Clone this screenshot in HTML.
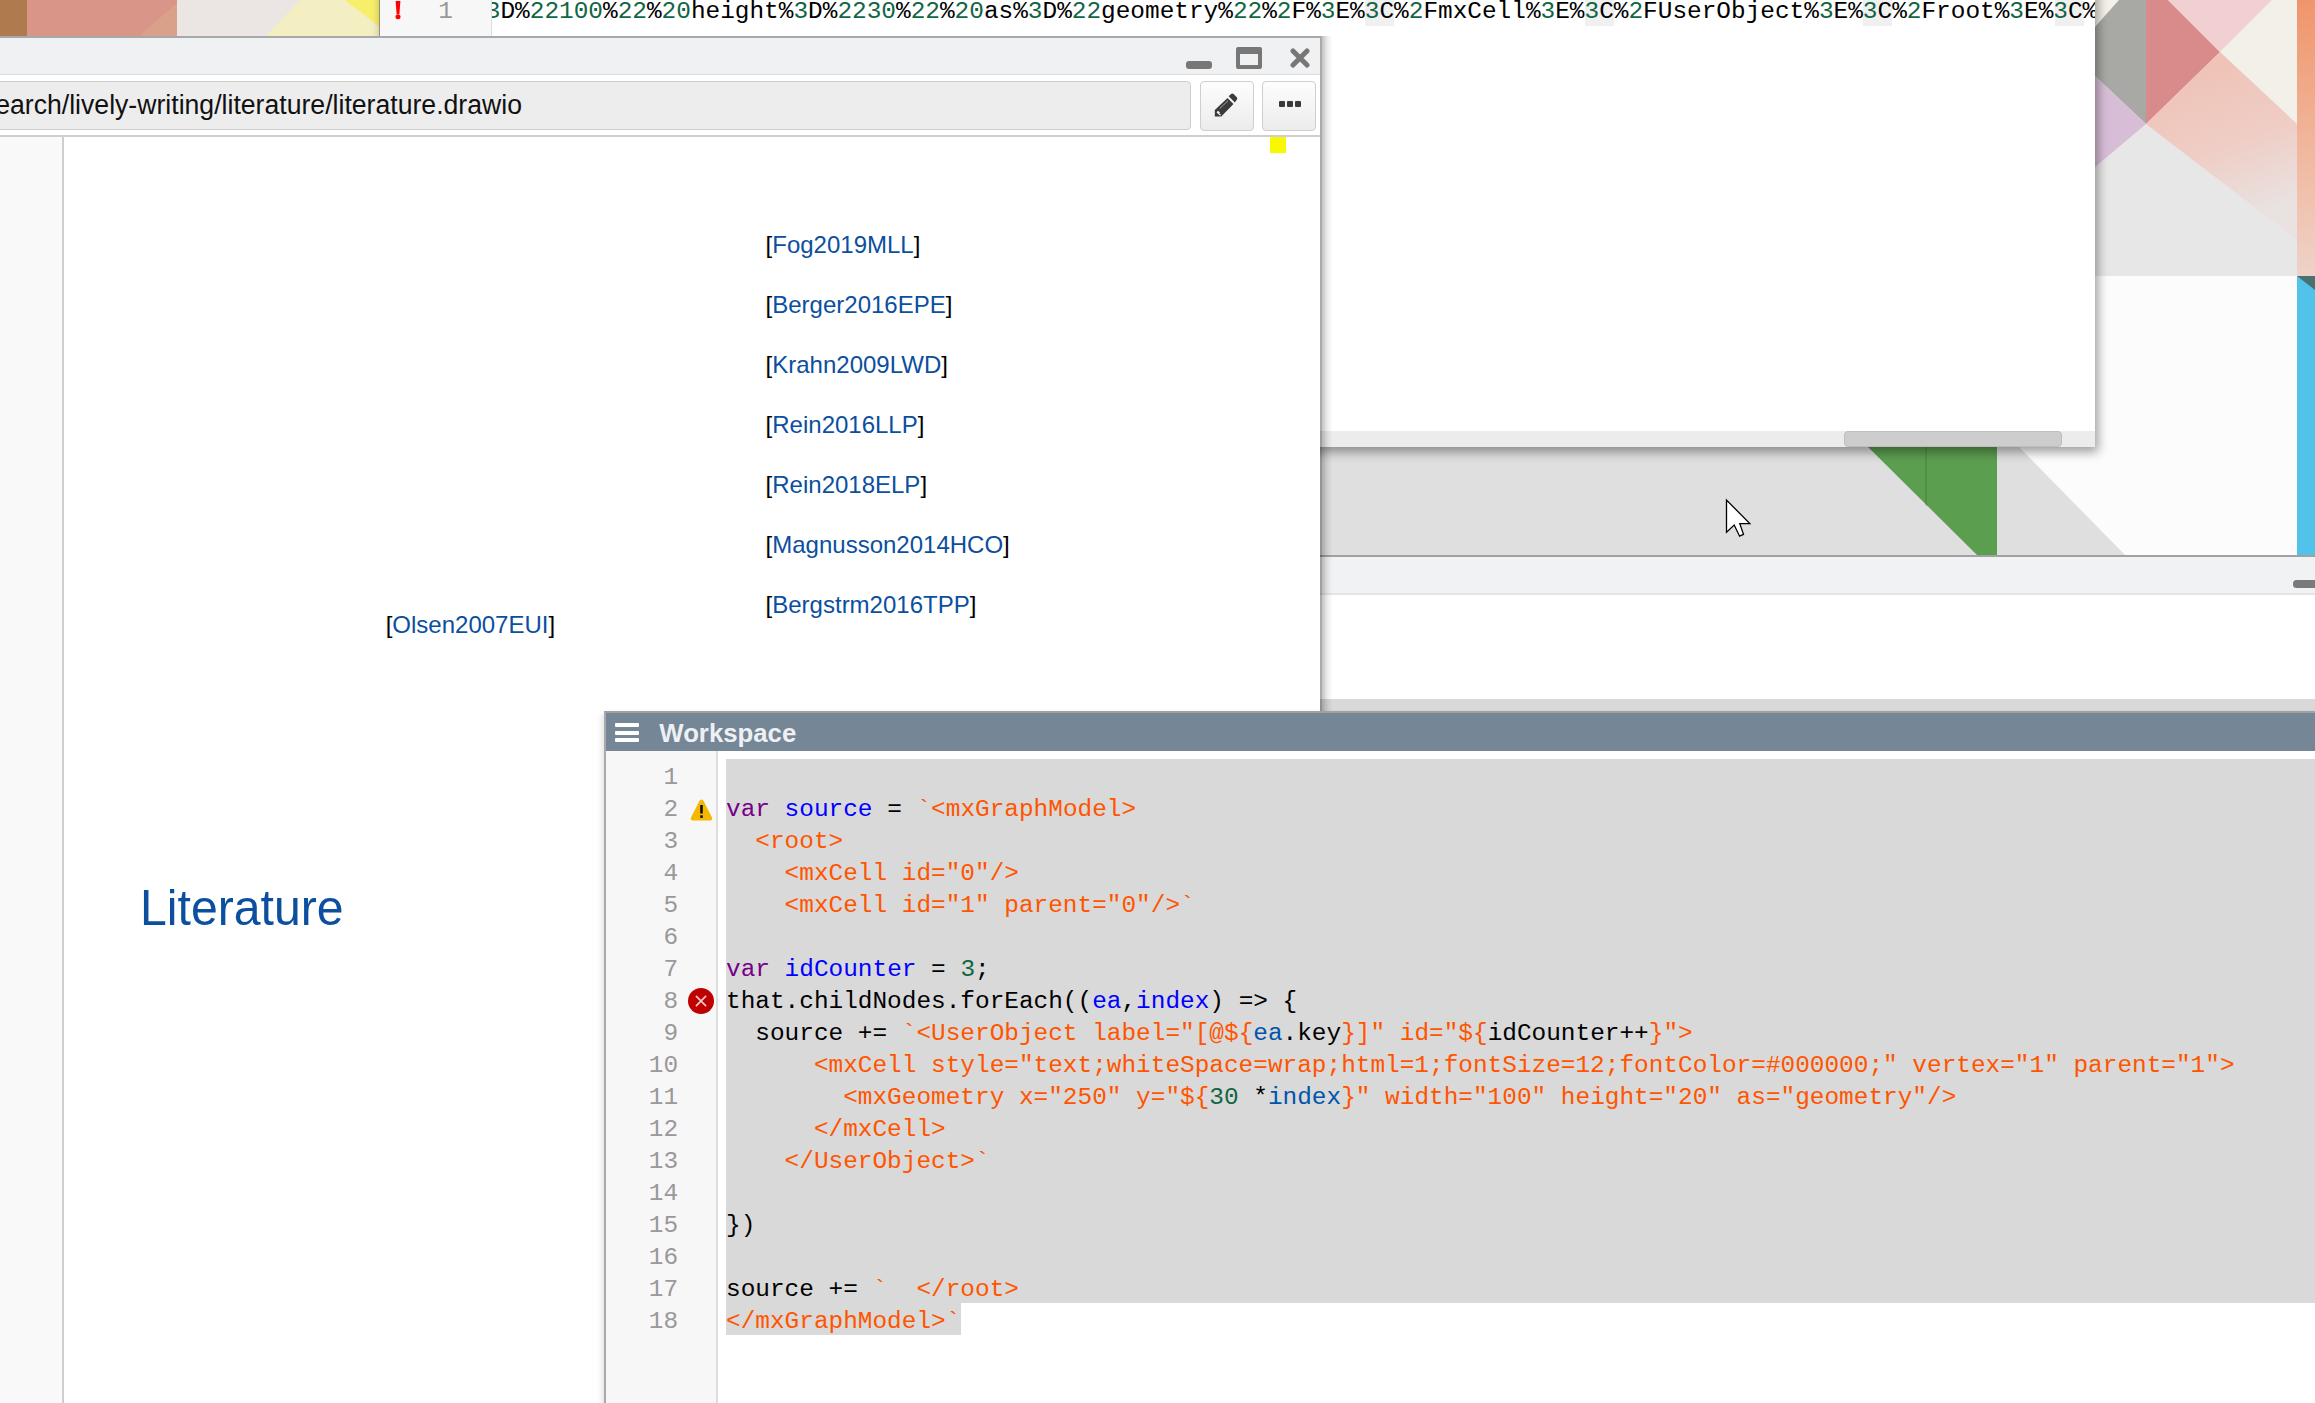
<!DOCTYPE html>
<html><head><meta charset="utf-8">
<style>
html,body{margin:0;padding:0;width:2315px;height:1403px;overflow:hidden;background:#dedede;}
*{box-sizing:border-box;}
.abs{position:absolute;}
.mono{font-family:"Liberation Mono",monospace;font-size:24.42px;white-space:pre;line-height:32px;}
.sans{font-family:"Liberation Sans",sans-serif;}
.k{color:#770088}.d{color:#0000ff}.s{color:#ff5500}.n{color:#116644}.v{color:#0055aa}.t{color:#000}
.cl{position:absolute;left:122px;height:32px;padding-top:2.5px;}
.ln{position:absolute;left:0;width:74.10000000000002px;text-align:right;color:#999;padding-top:2.5px;height:32px;}
.cite{position:absolute;font-family:"Liberation Sans",sans-serif;font-size:24px;color:#000;white-space:pre;line-height:28px;}
.cite span{color:#0b4f9e;}
</style></head>
<body>

<!-- desktop background -->
<svg class="abs" style="left:0;top:0" width="2315" height="1403" viewBox="0 0 2315 1403">
  <defs>
   <linearGradient id="gor" x1="0" y1="0" x2="0" y2="1"><stop offset="0" stop-color="#f0956a"/><stop offset="0.5" stop-color="#f0b59a"/><stop offset="1" stop-color="#efd2c8"/></linearGradient>
   <linearGradient id="gsal" x1="0" y1="0" x2="0.3" y2="1"><stop offset="0" stop-color="#efbfb0"/><stop offset="0.6" stop-color="#efcdc5"/><stop offset="1" stop-color="#e9e2e1"/></linearGradient>
  </defs>
  <rect x="0" y="0" width="2315" height="1403" fill="#dfdfdf"/>
  <rect x="0" y="0" width="27" height="37" fill="#b07a4f"/>
  <rect x="27" y="0" width="150" height="37" fill="#d99588"/>
  <polygon points="177,3 177,37 138,37" fill="#d9a08a"/>
  <rect x="177" y="0" width="203" height="37" fill="#ebe5e3"/>
  <polygon points="300,0 380,0 380,37 265,37" fill="#f3efc2"/>
  <polygon points="345,0 380,0 380,27" fill="#f7ee6a"/>
  <rect x="2095" y="0" width="220" height="276" fill="#e8e7e7"/>
  <polygon points="2095,0 2119,0 2095,27" fill="#f4f1e8"/>
  <polygon points="2119,0 2146,0 2146,124 2095,76 2095,27" fill="#a8a8a5"/>
  <polygon points="2095,76 2146,124 2095,167" fill="#d8bdd6"/>
  <polygon points="2146,0 2168,0 2220,52 2146,124" fill="#d98b8c"/>
  <polygon points="2168,0 2272,0 2220,52" fill="#f2cfd0"/>
  <polygon points="2272,0 2297,0 2297,124 2220,52" fill="#f3f0ea"/>
  <polygon points="2220,52 2297,124 2297,240 2146,124" fill="url(#gsal)"/>
  <rect x="2297" y="0" width="18" height="276" fill="url(#gor)"/>
  <rect x="2095" y="276" width="202" height="280" fill="#fcfcfc"/>
  <rect x="2297" y="276" width="18" height="280" fill="#51c2e9"/>
  <polygon points="2297,276 2315,276 2315,290" fill="#4a7070"/>
  <rect x="1320" y="447" width="977" height="109" fill="#dfdfdf"/>
  <polygon points="2019,447 2297,447 2297,556 2126,556" fill="#fcfcfc"/>
  <polygon points="1868,447 1997,447 1997,556 1978,556" fill="#5b9e4f"/>
  <polygon points="1925,447 1927,447 1927,506 1925,504" fill="#4a8a40" opacity=".7"/>
</svg>

<!-- right window (behind) -->
<div class="abs" style="left:1300px;top:555px;width:1015px;height:160px;background:#fff;border-top:2px solid rgba(0,0,0,.37);">
  <div class="abs" style="left:0;top:0;width:1015px;height:38px;background:#f1f2f4;border-bottom:2px solid #e4e5e6;"></div>
  <div class="abs" style="left:993.4px;top:23.2px;width:30px;height:7.7px;background:#7a7a7a;border-radius:3.5px;"></div>
  <div class="abs" style="left:0;top:142px;width:1015px;height:14px;background:#d9d9d9;"></div>
</div>

<!-- top editor window -->
<div class="abs" style="left:379.3px;top:-20px;width:1715.7px;height:467px;background:#fff;border-left:1.7px solid rgba(120,120,80,.8);box-shadow:3px 5px 10px rgba(0,0,0,.38);overflow:hidden;">
  <div class="abs" style="left:0;top:0;width:111.5px;height:465px;background:#f7f7f7;border-right:1.5px solid #ddd;"></div>
  <svg class="abs" style="left:15px;top:21px" width="6" height="19" viewBox="0 0 6 19"><path d="M0.6 0 L5.4 0 L4.4 13 L1.6 13 Z" fill="#f00"/><circle cx="3" cy="15.7" r="2.5" fill="#f00"/></svg>
  <div class="abs mono" style="left:0;width:72.69999999999999px;text-align:right;top:16.0px;color:#999;">1</div>
  <div class="abs" style="left:111.5px;top:0;width:1603px;height:60px;overflow:hidden;">
    <div class="abs" style="left:873.5px;top:0;width:29px;height:45.5px;background:#f0f0f0"></div>
    <div class="abs" style="left:1093.5px;top:0;width:29px;height:45.5px;background:#f0f0f0"></div>
    <div class="abs" style="left:1371.5px;top:0;width:29px;height:45.5px;background:#f0f0f0"></div>
    <div class="abs" style="left:1563.0px;top:0;width:29px;height:45.5px;background:#f0f0f0"></div>
    <div class="abs mono" style="left:-6.0000000000000115px;top:16.0px;"><span class="n">3</span><span class="t">D%</span><span class="n">22100</span><span class="t">%</span><span class="n">22</span><span class="t">%</span><span class="n">20</span><span class="t">height%</span><span class="n">3</span><span class="t">D%</span><span class="n">2230</span><span class="t">%</span><span class="n">22</span><span class="t">%</span><span class="n">20</span><span class="t">as%</span><span class="n">3</span><span class="t">D%</span><span class="n">22</span><span class="t">geometry%</span><span class="n">22</span><span class="t">%</span><span class="n">2</span><span class="t">F%</span><span class="n">3</span><span class="t">E%</span><span class="n">3</span><span class="t">C%</span><span class="n">2</span><span class="t">FmxCell%</span><span class="n">3</span><span class="t">E%</span><span class="n">3</span><span class="t">C%</span><span class="n">2</span><span class="t">FUserObject%</span><span class="n">3</span><span class="t">E%</span><span class="n">3</span><span class="t">C%</span><span class="n">2</span><span class="t">Froot%</span><span class="n">3</span><span class="t">E%</span><span class="n">3</span><span class="t">C%</span><span class="n">2</span><span class="t">FmxGraphModel%</span><span class="n">3</span><span class="t">E</span></div>
  </div>
  <div class="abs" style="left:0;top:451px;width:1715px;height:16px;background:#ececec;"></div>
  <div class="abs" style="left:1464px;top:451px;width:217.5px;height:15.5px;background:#cdcdcd;border:1px solid #bdbdbd;border-radius:4px;"></div>
</div>

<!-- drawio window -->
<div class="abs" style="left:-10px;top:36px;width:1330px;height:1380px;background:#fff;border-top:2px solid #a8a8a8;">
  <!-- title bar -->
  <div class="abs" style="left:0;top:0;width:1330px;height:37px;background:#f0f1f3;border-bottom:1px solid #dcdcdc;"></div>
  <!-- minimize / maximize / close -->
  <div class="abs" style="left:1195.5px;top:23px;width:26px;height:8px;background:#777;border-radius:3px;"></div>
  <div class="abs" style="left:1246px;top:8.700000000000003px;width:26px;height:22.5px;border:4px solid #777;border-top-width:7px;border-radius:2px;"></div>
  <svg class="abs" style="left:1299.7px;top:9.600000000000001px" width="20" height="20" viewBox="0 0 20 20"><path d="M3 3 L17 17 M17 3 L3 17" stroke="#777" stroke-width="5" stroke-linecap="round"/></svg>
  <!-- url input -->
  <div class="abs sans" style="left:-20px;top:42.8px;width:1220.6px;height:49px;background:#ededed;border:1px solid #cdcdcd;border-radius:4px;font-size:26.63px;line-height:47px;color:#111;white-space:pre;overflow:hidden;">
    <div class="abs" style="left:24.2px;top:0;transform:scaleY(1.065);transform-origin:0 32.5px;">earch/lively-writing/literature/literature.drawio</div>
  </div>
  <!-- buttons -->
  <div class="abs" style="left:1210.4px;top:42.5px;width:53.2px;height:50px;border:1px solid #cfcfcf;border-radius:4px;background:linear-gradient(#fdfdfd,#ececec);"></div>
  <svg class="abs" style="left:1209.4px;top:42.5px" width="54" height="50" viewBox="0 0 54 50">
    <path d="M15.8 35.4 L15.8 28.9 L28.5 17.1 L34.5 23.1 L22.3 35.4 Z" fill="#3b3b3b"/>
    <path d="M29.7 15.2 L32 13 Q33.3 11.9 34.6 13 L37.8 16.2 Q38.9 17.5 37.8 18.8 L35.9 21.4 Z" fill="#3b3b3b"/>
    <path d="M20.8 27.5 L29 19.7" stroke="#bbb" stroke-width="0.8"/>
    <path d="M17.6 31.2 L19 29.8 L21 31.6 L20.2 32.3 L22.3 34 L20.9 34.6 L19.6 33.3 L18.6 32.4 Z" fill="#f4f4f4"/>
  </svg>
  <div class="abs" style="left:1272.4px;top:42.5px;width:53.3px;height:50px;border:1px solid #cfcfcf;border-radius:4px;background:linear-gradient(#fdfdfd,#ececec);"></div>
  <div class="abs" style="left:1288.5px;top:62.8px;width:6px;height:6px;background:#3a3a3a;border-radius:1px;"></div>
  <div class="abs" style="left:1296.5px;top:62.8px;width:6px;height:6px;background:#3a3a3a;border-radius:1px;"></div>
  <div class="abs" style="left:1304.5px;top:62.8px;width:6px;height:6px;background:#3a3a3a;border-radius:1px;"></div>
  <!-- toolbar bottom line -->
  <div class="abs" style="left:0;top:97px;width:1330px;height:2px;background:#cfcfcf;"></div>
  <!-- sidebar -->
  <div class="abs" style="left:0;top:99px;width:74px;height:1300px;background:#f9f9f9;border-right:2px solid #cfcfcf;"></div>
  <!-- yellow square -->
  <div class="abs" style="left:1280px;top:99px;width:16px;height:16px;background:#f8f800;"></div>
</div>

<div class="abs" style="left:1320px;top:36px;width:13px;height:1370px;background:linear-gradient(to right,rgba(0,0,0,.34) 0,rgba(0,0,0,.33) 1.5px,rgba(0,0,0,.22) 2px,rgba(0,0,0,.2) 3.5px,rgba(0,0,0,.11) 6px,rgba(0,0,0,.03) 10px,rgba(0,0,0,0) 13px);"></div>
<!-- drawio content text (page coords) -->
<div class="cite" style="left:765.6px;top:230.53px">[<span>Fog2019MLL</span>]</div><div class="cite" style="left:765.6px;top:290.53px">[<span>Berger2016EPE</span>]</div><div class="cite" style="left:765.6px;top:350.53px">[<span>Krahn2009LWD</span>]</div><div class="cite" style="left:765.6px;top:410.53px">[<span>Rein2016LLP</span>]</div><div class="cite" style="left:765.6px;top:470.53px">[<span>Rein2018ELP</span>]</div><div class="cite" style="left:765.6px;top:530.53px">[<span>Magnusson2014HCO</span>]</div><div class="cite" style="left:765.6px;top:590.53px">[<span>Bergstrm2016TPP</span>]</div><div class="cite" style="left:385.7px;top:610.53px">[<span>Olsen2007EUI</span>]</div>
<div class="abs sans" style="left:140.0px;top:883.5074999999999px;font-size:48.2px;line-height:48px;transform:scaleY(1.045);transform-origin:0 44px;color:#0b4f9e;white-space:pre;">Literature</div>

<!-- workspace -->
<div class="abs" style="left:604px;top:711px;width:1720px;height:700px;background:#fff;border-left:2px solid #a9a9a9;border-top:2px solid #a0a0a0;box-shadow:-5px 0 6px -3px rgba(0,0,0,.12);">
</div>
<div class="abs" style="left:606px;top:713px;width:1709px;height:38px;background:#758696;"></div>
<div class="abs" style="left:615.4px;top:723.4px;width:23.4px;height:4px;background:#fff;border-radius:1px;"></div>
<div class="abs" style="left:615.4px;top:730.9px;width:23.4px;height:4px;background:#fff;border-radius:1px;"></div>
<div class="abs" style="left:615.4px;top:738.2px;width:23.4px;height:4px;background:#fff;border-radius:1px;"></div>
<div class="abs sans" style="left:659.3px;top:717.87px;font-size:25.75px;font-weight:bold;line-height:30px;color:#eef0f3;">Workspace</div>
<div class="abs" style="left:0;top:0;width:2315px;height:1403px;overflow:hidden;pointer-events:none;">
 <div class="abs" style="left:604px;top:711px;width:1711px;height:692px;">
  <div class="abs" style="left:2px;top:40px;width:112px;height:700px;background:#f7f7f7;border-right:2px solid #dddddd;"></div>
  <div class="abs" style="left:122px;top:48px;width:1600px;height:544px;background:#d9d9d9;"></div>
  <div class="abs" style="left:122px;top:592px;width:234.70000000000005px;height:32px;background:#d9d9d9;"></div>
  <div class="ln mono" style="top:48px">1</div><div class="ln mono" style="top:80px">2</div><div class="ln mono" style="top:112px">3</div><div class="ln mono" style="top:144px">4</div><div class="ln mono" style="top:176px">5</div><div class="ln mono" style="top:208px">6</div><div class="ln mono" style="top:240px">7</div><div class="ln mono" style="top:272px">8</div><div class="ln mono" style="top:304px">9</div><div class="ln mono" style="top:336px">10</div><div class="ln mono" style="top:368px">11</div><div class="ln mono" style="top:400px">12</div><div class="ln mono" style="top:432px">13</div><div class="ln mono" style="top:464px">14</div><div class="ln mono" style="top:496px">15</div><div class="ln mono" style="top:528px">16</div><div class="ln mono" style="top:560px">17</div><div class="ln mono" style="top:592px">18</div>
  <div class="cl mono" style="top:48px"></div><div class="cl mono" style="top:80px"><span class="k">var</span><span class="t"> </span><span class="d">source</span><span class="t"> = </span><span class="s">`&lt;mxGraphModel&gt;</span></div><div class="cl mono" style="top:112px"><span class="s">  &lt;root&gt;</span></div><div class="cl mono" style="top:144px"><span class="s">    &lt;mxCell id="0"/&gt;</span></div><div class="cl mono" style="top:176px"><span class="s">    &lt;mxCell id="1" parent="0"/&gt;`</span></div><div class="cl mono" style="top:208px"></div><div class="cl mono" style="top:240px"><span class="k">var</span><span class="t"> </span><span class="d">idCounter</span><span class="t"> = </span><span class="n">3</span><span class="t">;</span></div><div class="cl mono" style="top:272px"><span class="t">that.childNodes.forEach((</span><span class="d">ea</span><span class="t">,</span><span class="d">index</span><span class="t">) =&gt; {</span></div><div class="cl mono" style="top:304px"><span class="t">  source += </span><span class="s">`&lt;UserObject label="[@${</span><span class="v">ea</span><span class="t">.key</span><span class="s">}]" id="${</span><span class="t">idCounter++</span><span class="s">}"&gt;</span></div><div class="cl mono" style="top:336px"><span class="s">      &lt;mxCell style="text;whiteSpace=wrap;html=1;fontSize=12;fontColor=#000000;" vertex="1" parent="1"&gt;</span></div><div class="cl mono" style="top:368px"><span class="s">        &lt;mxGeometry x="250" y="${</span><span class="n">30</span><span class="t"> *</span><span class="v">index</span><span class="s">}" width="100" height="20" as="geometry"/&gt;</span></div><div class="cl mono" style="top:400px"><span class="s">      &lt;/mxCell&gt;</span></div><div class="cl mono" style="top:432px"><span class="s">    &lt;/UserObject&gt;`</span></div><div class="cl mono" style="top:464px"></div><div class="cl mono" style="top:496px"><span class="t">})</span></div><div class="cl mono" style="top:528px"></div><div class="cl mono" style="top:560px"><span class="t">source += </span><span class="s">`  &lt;/root&gt;</span></div><div class="cl mono" style="top:592px"><span class="s">&lt;/mxGraphModel&gt;`</span></div>
  <!-- warning icon -->
  <svg class="abs" style="left:85.70000000000005px;top:86.79999999999995px" width="23" height="24" viewBox="0 0 23 24">
    <path d="M11.5 1.5 Q12.8 1.5 13.6 3 L22 19.5 Q23 22.5 20 22.5 L3 22.5 Q0 22.5 1 19.5 L9.4 3 Q10.2 1.5 11.5 1.5 Z" fill="#f5b800"/>
    <rect x="10.2" y="7" width="2.6" height="8.5" fill="#111"/>
    <rect x="10.2" y="17.3" width="2.6" height="2.6" fill="#111"/>
  </svg>
  <!-- error icon -->
  <svg class="abs" style="left:84px;top:277px" width="26" height="26" viewBox="0 0 26 26">
    <circle cx="13" cy="13" r="13" fill="#be0000"/>
    <path d="M8.4 8.4 L17.6 17.6 M17.6 8.4 L8.4 17.6" stroke="#f0caca" stroke-width="1.7" stroke-linecap="round"/>
  </svg>
 </div>
</div>

<!-- mouse cursor -->
<svg class="abs" style="left:1720px;top:495px" width="40" height="50" viewBox="1720 495 40 50">
  <path d="M1726.5 500 L1726.5 532.2 L1734.2 525 L1739.6 536.2 L1743.5 534.4 L1739.8 523.6 L1749.8 523.6 Z" fill="#fff" stroke="#000" stroke-width="1.3" stroke-linejoin="miter"/>
</svg>

</body></html>
